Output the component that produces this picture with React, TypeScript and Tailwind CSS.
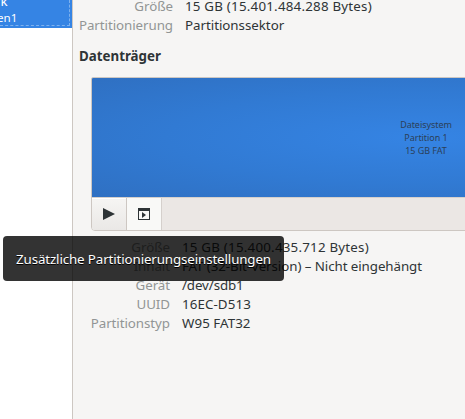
import React from "react";

interface Detail {
  label: string;
  value: string;
  tracking?: string;
}

const driveDetails: Detail[] = [
  { label: "Größe", value: "15 GB (15.401.484.288 Bytes)", tracking: "tracking-[0.22px]" },
  { label: "Partitionierung", value: "Partitionssektor", tracking: "tracking-[-0.03px]" },
];

const volumeDetails: Detail[] = [
  { label: "Größe", value: "15 GB (15.400.435.712 Bytes)", tracking: "tracking-[0.22px]" },
  { label: "Inhalt", value: "FAT (32-Bit-Version) – Nicht eingehängt", tracking: "tracking-[-0.07px]" },
  { label: "Gerät", value: "/dev/sdb1", tracking: "tracking-[-0.1px]" },
  { label: "UUID", value: "16EC-D513", tracking: "tracking-[0.1px]" },
  { label: "Partitionstyp", value: "W95 FAT32", tracking: "tracking-[0.06px]" },
];

function DetailList({ items, className }: { items: Detail[]; className: string }) {
  return (
    <dl className={`grid gap-x-3 leading-[19px] whitespace-nowrap ${className}`}>
      {items.map((item) => (
        <React.Fragment key={item.label}>
          <dt className="text-right tracking-[-0.06px] text-[#929595]">{item.label}</dt>
          <dd className={item.tracking}>{item.value}</dd>
        </React.Fragment>
      ))}
    </dl>
  );
}

function Sidebar() {
  return (
    <aside className="flex w-[73px] shrink-0 flex-col border-r border-[#cdc7c2] bg-white text-white">
      <div className="h-7 overflow-hidden bg-[#3584e4] pr-0.5 pb-0.5">
        <div className="flex h-full flex-col justify-end border-r border-b border-dashed border-[#7db1ee]">
          <span className="-ml-[5px] leading-[17px]">rk</span>
          <span className="-ml-[3px] text-[11.6px] leading-[15px]">en1</span>
        </div>
      </div>
    </aside>
  );
}

function VolumeBar() {
  return (
    <div className="ml-[18px] w-[670px] overflow-hidden rounded-t-[2px] rounded-b-[4px] border border-[#cdc7c2]">
      <div className="flex h-[119px] items-center justify-center bg-[radial-gradient(ellipse_at_center,#3584e4_0%,#317ad3_55%,#2f70c2_100%)] text-center text-[9px] leading-[13px] tracking-[-0.05px] text-[#2b3f58]">
        <div>
          <p>Dateisystem</p>
          <p>Partition 1</p>
          <p>15 GB FAT</p>
        </div>
      </div>
      <div className="flex h-[33px] border-t border-[#d5d0cc] bg-[#ebe7e4]">
        <button
          aria-label="Einhängen"
          className="flex w-[35px] items-center justify-center border-r border-[#cdc7c2] bg-gradient-to-b from-[#f6f5f3] to-[#eae8e6] shadow-[inset_0_1px_#ffffff]"
        >
          <svg width="12" height="12" viewBox="0 0 12 12" fill="#2e3436">
            <path d="M0 0L12 6L0 12Z" />
          </svg>
        </button>
        <button
          aria-label="Zusätzliche Partitionierungseinstellungen"
          className="flex w-[35px] items-center justify-center border-r border-[#d5d0cc] bg-[#f9f9f7]"
        >
          <svg width="12" height="12" viewBox="0 0 12 12" fill="#2e3436">
            <path fillRule="evenodd" d="M0 0H12V12H0ZM1 3V11H11V3Z" />
            <path d="M4 4L8 7L4 10Z" />
          </svg>
        </button>
      </div>
    </div>
  );
}

export default function App() {
  return (
    <div className="relative flex h-[419px] w-[465px] overflow-hidden bg-[#f6f5f4] font-['Noto_Sans',sans-serif] text-[13.33px] text-[#2e3436]">
      <Sidebar />
      <main className="min-w-0 flex-1 overflow-hidden">
        <DetailList items={driveDetails} className="-mt-[3px] grid-cols-[100px_1fr]" />
        <h2 className="mt-3 mb-[11px] ml-1.5 leading-[19px] font-bold">Datenträger</h2>
        <VolumeBar />
        <DetailList items={volumeDetails} className="mt-[7px] grid-cols-[97px_1fr]" />
      </main>

      <div
        role="tooltip"
        className="absolute top-[236px] left-[3px] flex h-[45px] w-[281px] items-center justify-center rounded-[4px] bg-black/80 pt-[3px] tracking-[-0.12px] whitespace-nowrap text-white [text-shadow:0_1px_#000]"
      >
        Zusätzliche Partitionierungseinstellungen
      </div>
    </div>
  );
}
